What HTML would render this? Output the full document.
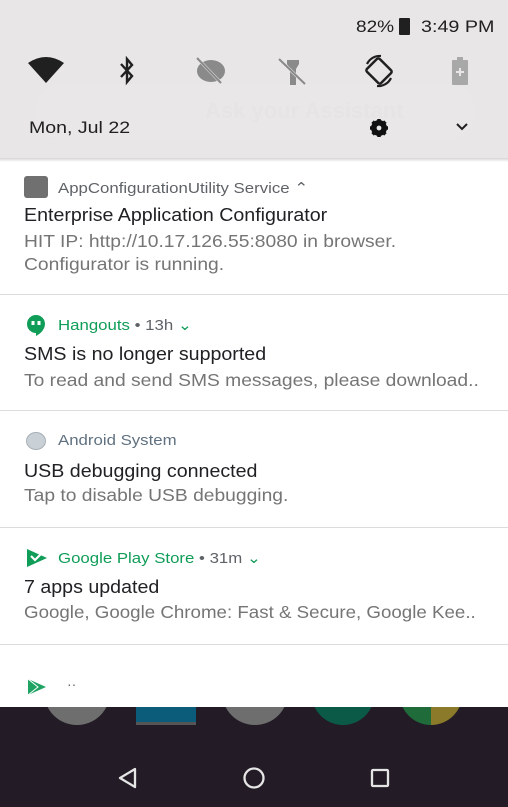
<!DOCTYPE html>
<html><head><meta charset="utf-8"><style>
body{margin:0;width:508px;height:807px;overflow:hidden;position:relative;font-family:"Liberation Sans",sans-serif;background:#fff}
.a{position:absolute;white-space:nowrap;transform-origin:0 0}
.hd{font-size:15px;color:#5f6368;transform:scaleX(1.12)}
.t{font-size:18px;color:#202124;transform:scaleX(1.09)}
.b{font-size:17.5px;color:#757575;transform:scaleX(1.1)}
.g{color:#0f9d58}
.hr{position:absolute;left:0;width:508px;height:1px;background:#dcdcdc}
</style></head><body>
<div class="a" style="left:0;top:0;width:508px;height:158px;background:#e8e6e7"></div>
<div class="a" style="left:0;top:158px;width:508px;height:4px;background:linear-gradient(#d6d4d5,#fff)"></div>
<div class="a" style="left:35px;top:84px;width:440px;height:56px;border-radius:28px;background:#e9e7e8"></div>
<div class="a" style="left:205px;top:98px;font-size:22px;color:#e6e4e5;font-weight:bold">Ask your Assistant</div>
<div class="a" style="left:356px;top:17px;font-size:17px;color:#202020;transform:scaleX(1.12)">82%</div>
<div class="a" style="left:399px;top:18px;width:11px;height:17px;background:#202020;border-radius:1px"></div>
<div class="a" style="left:421px;top:17px;font-size:17px;color:#202020;transform:scaleX(1.16)">3:49 PM</div>
<svg class="a" style="left:27px;top:56px" width="38" height="28" viewBox="0 0 38 28"><path d="M1 7Q19 -5 37 7L19 27Z" fill="#202020"/></svg>
<svg class="a" style="left:117px;top:56px" width="20" height="30" viewBox="0 0 20 30"><path d="M4 8L15 20L10 26V3L15 9L4 21" stroke="#202020" stroke-width="2.4" fill="none"/></svg>
<svg class="a" style="left:195px;top:57px" width="32" height="28" viewBox="0 0 32 28"><ellipse cx="16" cy="14" rx="14" ry="11" fill="#8a8a8a"/><path d="M3 2L27 27" stroke="#e8e6e7" stroke-width="3"/><path d="M2 1L26 26" stroke="#8a8a8a" stroke-width="2"/></svg>
<svg class="a" style="left:278px;top:58px" width="30" height="28" viewBox="0 0 30 28"><path d="M9 2H21V6L18 11V27H12V11L9 6Z" fill="#8a8a8a"/><path d="M2 2L28 27" stroke="#e8e6e7" stroke-width="3"/><path d="M1 1L27 26" stroke="#8a8a8a" stroke-width="2"/></svg>
<svg class="a" style="left:361px;top:54px" width="36" height="34" viewBox="0 0 36 34"><rect x="9" y="7" width="18" height="20" rx="2" transform="rotate(-45 18 17)" fill="none" stroke="#202020" stroke-width="2.5"/><path d="M6 10A14 14 0 0 1 20 2M30 24A14 14 0 0 1 16 32" stroke="#202020" stroke-width="2.2" fill="none"/></svg>
<svg class="a" style="left:451px;top:57px" width="18" height="28" viewBox="0 0 18 28"><rect x="6" y="0" width="6" height="4" fill="#a8a8a8"/><rect x="1" y="3" width="16" height="25" rx="1" fill="#a8a8a8"/><path d="M9 11V19M5 15H13" stroke="#e8e6e7" stroke-width="2"/></svg>
<div class="a" style="left:29px;top:118px;font-size:17px;color:#202020;transform:scaleX(1.15)">Mon, Jul 22</div>
<svg class="a" style="left:369px;top:118px" width="20" height="20" viewBox="0 0 20 20"><circle cx="10" cy="10" r="6" fill="none" stroke="#111" stroke-width="4"/><path d="M10 1V19M1 10H19M3.6 3.6L16.4 16.4M16.4 3.6L3.6 16.4" stroke="#111" stroke-width="3.5"/><circle cx="10" cy="10" r="2.4" fill="#e8e6e7"/></svg>
<svg class="a" style="left:455px;top:122px" width="14" height="10" viewBox="0 0 14 10"><path d="M2 2L7 7L12 2" stroke="#202020" stroke-width="2" fill="none"/></svg>
<div class="a" style="left:24px;top:176px;width:24px;height:22px;background:#707070;border-radius:3px"></div>
<div class="a hd" style="left:58px;top:179px">AppConfigurationUtility Service ⌃</div>
<div class="a t" style="left:24px;top:205px">Enterprise Application Configurator</div>
<div class="a b" style="left:24px;top:231px">HIT IP: http://10.17.126.55:8080 in browser.</div>
<div class="a b" style="left:24px;top:254px">Configurator is running.</div>
<div class="hr" style="top:294px"></div>
<svg class="a" style="left:26px;top:314px" width="20" height="22" viewBox="0 0 20 22"><path d="M10 1A9 9 0 0 0 10 19V22C16 19 19 14 19 10A9 9 0 0 0 10 1Z" fill="#0f9d58"/><rect x="5.5" y="7" width="3" height="4" fill="#fff"/><rect x="11.5" y="7" width="3" height="4" fill="#fff"/></svg>
<div class="a hd" style="left:58px;top:316px"><span class="g">Hangouts</span> • 13h <span class="g">⌄</span></div>
<div class="a t" style="left:24px;top:344px">SMS is no longer supported</div>
<div class="a b" style="left:24px;top:370px">To read and send SMS messages, please download..</div>
<div class="hr" style="top:410px"></div>
<div class="a" style="left:26px;top:432px;width:20px;height:18px;border-radius:50%;background:#c9d0d6;border:1px solid #a7b0b8;box-sizing:border-box"></div>
<div class="a hd" style="left:58px;top:432px;color:#5f7180">Android System</div>
<div class="a t" style="left:24px;top:461px">USB debugging connected</div>
<div class="a b" style="left:24px;top:485px">Tap to disable USB debugging.</div>
<div class="hr" style="top:527px"></div>
<svg class="a" style="left:26px;top:548px" width="22" height="20" viewBox="0 0 22 20"><path d="M1 1L21 10L1 19Z" fill="#0f9d58"/><path d="M5 8L9 12L17 4" stroke="#fff" stroke-width="2.2" fill="none"/></svg>
<div class="a hd" style="left:58px;top:549px"><span class="g">Google Play Store</span> • 31m <span class="g">⌄</span></div>
<div class="a t" style="left:24px;top:577px">7 apps updated</div>
<div class="a b" style="left:24px;top:602px;transform:scaleX(1.07)">Google, Google Chrome: Fast &amp; Secure, Google Kee..</div>
<div class="hr" style="top:644px"></div>
<svg class="a" style="left:27px;top:678px" width="20" height="18" viewBox="0 0 20 18"><path d="M1 1L19 9L1 17Z" fill="#1ea362"/><path d="M1 1L11 9L1 17" stroke="#fff" stroke-width="1" fill="none"/></svg>
<div class="a" style="left:67px;top:676px;font-size:14px;color:#666">··</div>
<div class="a" style="left:0;top:707px;width:508px;height:100px;background:#231c26;overflow:hidden">
<div class="a" style="left:44px;top:-48px;width:66px;height:66px;border-radius:50%;background:#6e6e6e"></div>
<div class="a" style="left:136px;top:0;width:60px;height:15px;background:#0b5b7a;border-bottom:3px solid #555"></div>
<div class="a" style="left:222px;top:-48px;width:66px;height:66px;border-radius:50%;background:#6e6e6e"></div>
<div class="a" style="left:311px;top:-48px;width:64px;height:66px;border-radius:50%;background:#0b5a48"></div>
<div class="a" style="left:399px;top:-48px;width:64px;height:66px;border-radius:50%;background:linear-gradient(90deg,#1f6b3a 50%,#8a7a2a 50%)"></div>
</div>
<svg class="a" style="left:117px;top:766px" width="22" height="24" viewBox="0 0 22 24"><path d="M18 3L3 12L18 21Z" fill="none" stroke="#e5e5e5" stroke-width="2.3" stroke-linejoin="round"/></svg>
<svg class="a" style="left:242px;top:766px" width="24" height="24" viewBox="0 0 24 24"><circle cx="12" cy="12" r="9.5" fill="none" stroke="#e5e5e5" stroke-width="2.3"/></svg>
<svg class="a" style="left:370px;top:768px" width="20" height="20" viewBox="0 0 20 20"><rect x="2" y="2" width="16" height="16" rx="1" fill="none" stroke="#e5e5e5" stroke-width="2.3"/></svg>
</body></html>
